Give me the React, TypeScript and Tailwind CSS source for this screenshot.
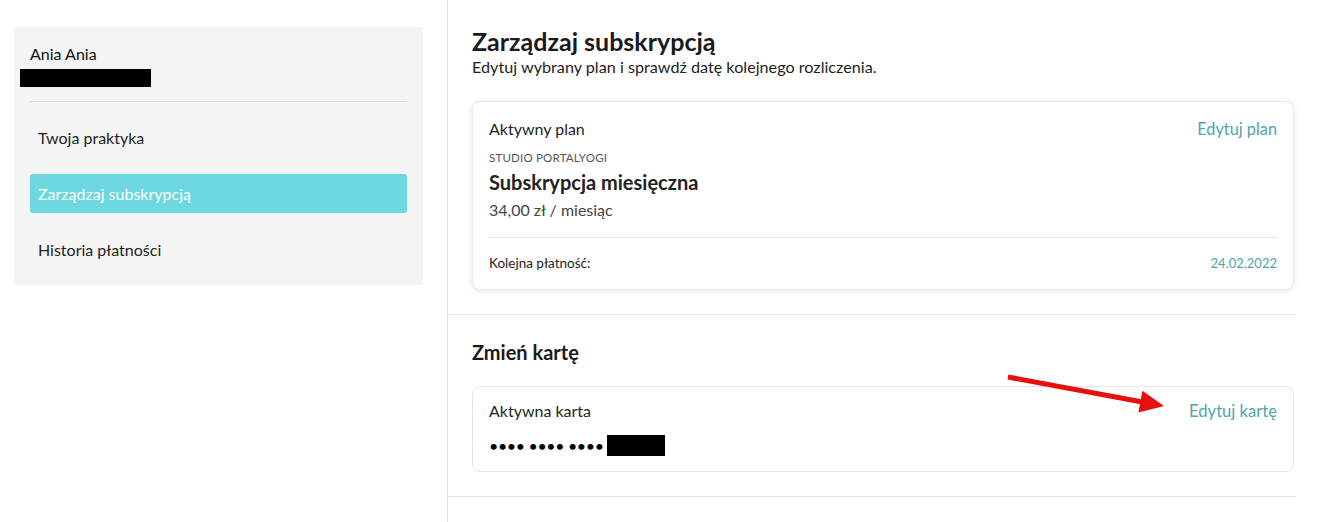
import { FC } from "react";

const navItems = [
  { label: "Twoja praktyka", active: false },
  { label: "Zarządzaj subskrypcją", active: true },
  { label: "Historia płatności", active: false },
];

const Sidebar: FC = () => {
  return (
    <div className="w-[409px] bg-[#f4f4f4] pt-4 pb-4">
      <div className="px-4">
        <div className="text-[16px] leading-[22px] text-[#111]">Ania Ania</div>
        <div className="mt-[4px] ml-[-10px] h-[18px] w-[131px] bg-black" />
        <div className="mt-[14px] border-t border-[#dcdcdc]" />
      </div>
      <nav className="mt-[16px] flex flex-col gap-[17px] pl-4 pr-4">
        {navItems.map((item) => (
          <div
            key={item.label}
            className={`flex h-[39px] items-center rounded-[3px] px-2 text-[16px] ${
              item.active ? "bg-[#6dd8e0] text-white" : "text-[#1e1e1e]"
            }`}
          >
            {item.label}
          </div>
        ))}
      </nav>
    </div>
  );
};

const PlanCard: FC = () => {
  return (
    <div className="rounded-[8px] border border-[#ececec] bg-white px-4 pt-4 pb-4 shadow-[0_1px_6px_rgba(0,0,0,0.10)]">
      <div className="flex items-center justify-between text-[16px] leading-[22px]">
        <span className="text-[#1e1e1e]">Aktywny plan</span>
        <span className="text-[16.3px] text-[#4ea6a9]">Edytuj plan</span>
      </div>
      <div className="mt-[10px] text-[11.5px] leading-[16px] uppercase tracking-[0.2px] text-[#555]">
        Studio Portalyogi
      </div>
      <div className="mt-[3px] text-[20px] leading-[26px] font-bold text-[#222]">
        Subskrypcja miesięczna
      </div>
      <div className="mt-[4px] text-[16px] leading-[22px] text-[#444]">
        34,00 zł / miesiąc
      </div>
      <div className="mt-[16px] border-t border-[#e3e3e3]" />
      <div className="mt-[15px] flex items-center justify-between leading-[20px]">
        <span className="text-[13.5px] text-[#1e1e1e]">Kolejna płatność:</span>
        <span className="text-[13px] text-[#4ea6a9]">24.02.2022</span>
      </div>
    </div>
  );
};

const CardBox: FC = () => {
  return (
    <div className="rounded-[8px] border border-[#e6e6e6] bg-white px-4 pt-[13px] pb-[15px]">
      <div className="flex items-center justify-between leading-[22px]">
        <span className="text-[16px] text-[#1e1e1e]">Aktywna karta</span>
        <span className="text-[16.6px] text-[#4ea6a9]">Edytuj kartę</span>
      </div>
      <div className="mt-[13px] flex items-center">
        <span className="text-[16px] leading-[21px] tracking-[-0.35px] text-black">
          •••• •••• ••••
        </span>
        <div className="ml-[3px] h-[21px] w-[58px] bg-black" />
      </div>
    </div>
  );
};

const App: FC = () => {
  return (
    <div className="relative h-[522px] w-[1332px] overflow-hidden bg-white font-['Lato','Liberation_Sans',sans-serif]">
      <div className="flex h-full">
        <div className="w-[447px] shrink-0 pt-[27px] pl-[14px]">
          <Sidebar />
        </div>
        <main className="w-[849px] shrink-0 border-l border-[#e6e6e6]">
          <section className="pl-6 pr-[2px] pt-[26px] pb-[24px] border-b border-[#e3e3e3]">
            <h1 className="text-[25px] leading-[30px] font-bold text-[#1a1a1a]">
              Zarządzaj subskrypcją
            </h1>
            <p className="text-[16.2px] leading-[22px] text-[#1e1e1e]">
              Edytuj wybrany plan i sprawdź datę kolejnego rozliczenia.
            </p>
            <div className="mt-[23px]">
              <PlanCard />
            </div>
          </section>
          <section className="pl-6 pr-[2px] pt-[24px] pb-[24px] border-b border-[#e3e3e3]">
            <h2 className="text-[20px] leading-[26px] font-bold text-[#1a1a1a]">
              Zmień kartę
            </h2>
            <div className="mt-[21px]">
              <CardBox />
            </div>
          </section>
        </main>
      </div>
      <svg
        className="pointer-events-none absolute left-0 top-0"
        width="1332"
        height="522"
        viewBox="0 0 1332 522"
      >
        <line x1="1008" y1="377" x2="1145" y2="402.5" stroke="#e8100e" strokeWidth="5" />
        <polygon points="1164,406 1142.4,390.8 1138.4,412.4" fill="#e8100e" />
      </svg>
    </div>
  );
};

export default App;
